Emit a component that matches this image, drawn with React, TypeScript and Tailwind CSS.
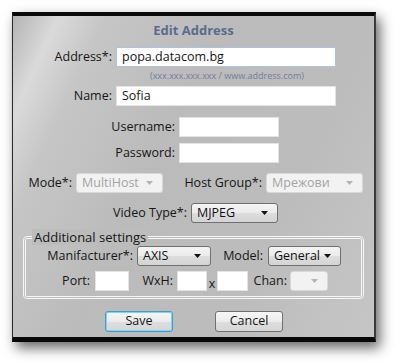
const Arrow = ({ disabled }: { disabled?: boolean }) => (
  <svg width="7" height="4" viewBox="0 0 7 4" className="shrink-0">
    <polygon points="0,0 7,0 3.5,4" fill={disabled ? '#b4b4b4' : '#111'} />
  </svg>
);

const Combo = ({ value, width, disabled }: { value: string; width: string; disabled?: boolean }) => (
  <div
    className={`${width} h-[20px] flex items-center justify-between pl-[5px] pr-[9px] rounded-[3px] border ${
      disabled
        ? 'bg-[#f2f2f2] border-[#d8d8d8] text-[#a4a4a4]'
        : 'bg-[linear-gradient(#f4f4f4_0%,#ebebeb_50%,#dddddd_51%,#d4d4d4_100%)] border-[#707070] text-[#111]'
    }`}
  >
    <span>{value}</span>
    <Arrow disabled={disabled} />
  </div>
);

const Field = ({ value, width, className = '' }: { value?: string; width: string; className?: string }) => (
  <div className={`${width} h-[20px] bg-white flex items-center pl-[5px] border border-[#e4e4e4] ${className}`}>
    {value}
  </div>
);

const Button = ({ label, focused }: { label: string; focused?: boolean }) => (
  <div
    className={`w-[68px] h-[21px] flex items-center justify-center rounded-[3px] border bg-[linear-gradient(#f6f6f6_0%,#ececec_50%,#dedede_51%,#d6d6d6_100%)] ${
      focused ? 'border-[#3c9fd0] shadow-[inset_0_0_0_1px_#7fd4f2]' : 'border-[#707070]'
    }`}
  >
    {label}
  </div>
);

export default function App() {
  return (
    <div className="w-[396px] h-[363px] bg-white pt-[12px] pl-[12px]" style={{ fontFamily: '"Segoe UI", "Open Sans", sans-serif' }}>
      <div className="w-[364px] h-[330px] flex flex-col border-t-[4px] border-b-[5px] border-l border-r-2 border-t-[#0a0a0a] border-b-[#080808] border-l-[#2a2a2a] border-r-[#3a3a3a] shadow-[4px_6px_12px_rgba(0,0,0,0.6)] bg-[linear-gradient(115deg,#b4b4b4_0%,#dadada_9%,#c6c6c6_18%,#bbbbbb_40%,#bcbcbc_70%,#c6c6c6_100%)] text-[12.5px] text-[#161616] leading-none">
        <div className="h-[28px] flex items-center justify-center font-bold text-[13px] text-[#5b6b8e]">Edit Address</div>

        <div className="mt-[3px] h-[20px] flex items-center">
          <span className="w-[99px] text-right">Address*:</span>
          <Field value="popa.datacom.bg" width="w-[220px]" className="ml-[4px] !border-[#a9c4de]" />
        </div>
        <div className="h-[16px] flex items-center pl-[137px] text-[9px] text-[#6e7fa2]">(xxx.xxx.xxx.xxx / www.address.com)</div>
        <div className="mt-[3px] h-[20px] flex items-center">
          <span className="w-[99px] text-right">Name:</span>
          <Field value="Sofia" width="w-[220px]" className="ml-[4px]" />
        </div>

        <div className="mt-[11px] h-[20px] flex items-center">
          <span className="w-[162px] text-right">Username:</span>
          <Field width="w-[100px]" className="ml-[4px]" />
        </div>
        <div className="mt-[6px] h-[20px] flex items-center">
          <span className="w-[162px] text-right">Password:</span>
          <Field width="w-[100px]" className="ml-[4px]" />
        </div>

        <div className="mt-[10px] h-[20px] flex items-center">
          <span className="w-[59px] text-right">Mode*:</span>
          <div className="ml-[4px]">
            <Combo value="MultiHost" width="w-[87px]" disabled />
          </div>
          <span className="w-[99px] text-right">Host Group*:</span>
          <div className="ml-[4px]">
            <Combo value="Мрежови" width="w-[97px]" disabled />
          </div>
        </div>

        <div className="mt-[10px] h-[20px] flex items-center">
          <span className="w-[174px] text-right">Video Type*:</span>
          <div className="ml-[4px]">
            <Combo value="MJPEG" width="w-[87px]" />
          </div>
        </div>

        <div className="relative mt-[13px] ml-[10px] w-[341px] rounded-[4px] border-[3px] border-double border-[#f6f6f6] pt-[7px] pb-[5px]">
          <span className="absolute -top-[10px] left-[6px] px-[2px] h-[16px] flex items-center bg-[#bcbcbc] text-[13px]">Additional settings</span>
          <div className="h-[20px] flex items-center">
            <span className="w-[107px] text-right">Manifacturer*:</span>
            <div className="ml-[4px]">
              <Combo value="AXIS" width="w-[74px]" />
            </div>
            <span className="w-[52px] text-right">Model:</span>
            <div className="ml-[5px]">
              <Combo value="General" width="w-[73px]" />
            </div>
          </div>
          <div className="mt-[5px] h-[20px] flex items-center">
            <span className="w-[64px] text-right">Port:</span>
            <Field width="w-[34px]" className="ml-[5px]" />
            <span className="w-[44px] text-right">WxH:</span>
            <Field width="w-[30px]" className="ml-[4px]" />
            <span className="w-[10px] self-end text-center pb-[1px]">x</span>
            <Field width="w-[31px]" />
            <span className="w-[39px] text-right">Chan:</span>
            <div className="ml-[3px]">
              <Combo value="" width="w-[38px]" disabled />
            </div>
          </div>
        </div>

        <div className="mt-[12px] ml-[92px] flex gap-[42px]">
          <Button label="Save" focused />
          <Button label="Cancel" />
        </div>
      </div>
    </div>
  );
}
